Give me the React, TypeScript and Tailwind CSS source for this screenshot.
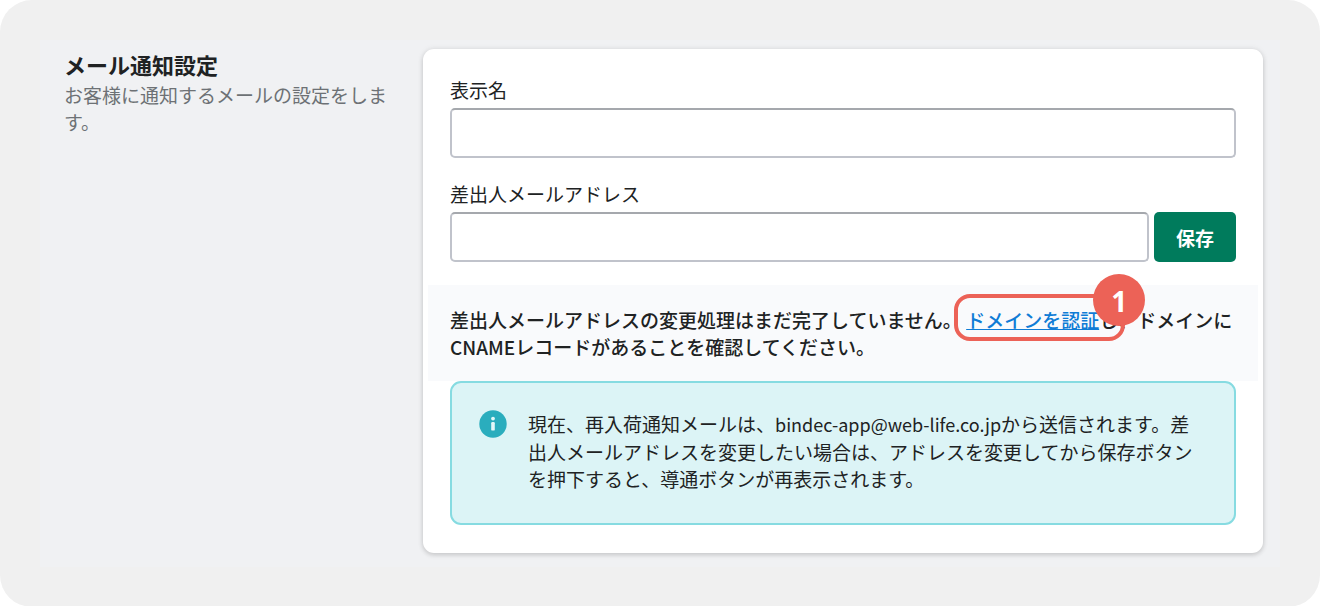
import { useState, type ReactNode } from "react";

interface FieldProps {
  id: string;
  label: string;
  type?: string;
  value: string;
  onChange: (value: string) => void;
  children?: ReactNode;
}

function Field({ id, label, type = "text", value, onChange, children }: FieldProps) {
  return (
    <div>
      <label htmlFor={id} className="block">
        {label}
      </label>
      <div className="mt-[5px] flex gap-[5px]">
        <input
          id={id}
          type={type}
          value={value}
          onChange={(e) => onChange(e.target.value)}
          className="h-[50px] min-w-0 flex-1 rounded-[5px] border-2 border-[#c0c3cb] border-t-[#a5a8ad] bg-white px-4 outline-none focus:border-[#458fff]"
        />
        {children}
      </div>
    </div>
  );
}

function InfoIcon() {
  return (
    <svg viewBox="0 0 28 28" className="h-7 w-7 shrink-0" aria-hidden="true">
      <circle cx="14" cy="14" r="13.7" fill="#2aadbd" />
      <circle cx="14" cy="8.6" r="1.9" fill="#e3f7f8" />
      <rect x="12.2" y="12" width="3.6" height="8.6" rx="1.2" fill="#e3f7f8" />
    </svg>
  );
}

function StepMarker({ step }: { step: number }) {
  return (
    <>
      <span className="pointer-events-none absolute -top-3 -right-[26px] -bottom-2 -left-3 rounded-2xl border-4 border-[#ec6257]" />
      <span className="pointer-events-none absolute -top-8 -right-[46px] flex h-[52px] w-[52px] items-center justify-center rounded-full bg-[#ec6257] pt-0.5 font-['Noto_Sans',sans-serif] text-[28px] font-bold text-white">
        {step}
      </span>
    </>
  );
}

export default function App() {
  const [displayName, setDisplayName] = useState("");
  const [senderEmail, setSenderEmail] = useState("");

  return (
    <div className="rounded-[32px] bg-[#f0f0f0] p-10 font-['Noto_Sans_CJK_JP',sans-serif] text-[19px] leading-[27px] text-[#202223]">
      <section className="flex bg-[#f0f1f3] pt-[9px] pr-[17px] pb-[14px] pl-6">
        <div className="mr-[35px] w-[324px] shrink-0">
          <h2 className="text-[22px] leading-[30px] font-bold">メール通知設定</h2>
          <p className="mt-0.5 text-[#6d7175]">お客様に通知するメールの設定をします。</p>
        </div>

        <form
          className="min-w-0 flex-1 rounded-[11px] bg-white pb-7 shadow-[0_0_6px_rgba(23,24,24,0.08),0_2px_5px_rgba(0,0,0,0.14)]"
          onSubmit={(e) => e.preventDefault()}
        >
          <div className="flex flex-col gap-[22px] px-[27px] pt-[27px]">
            <Field id="display-name" label="表示名" value={displayName} onChange={setDisplayName} />
            <Field
              id="sender-email"
              label="差出人メールアドレス"
              type="email"
              value={senderEmail}
              onChange={setSenderEmail}
            >
              <button
                type="submit"
                className="w-[82px] shrink-0 rounded-[5px] bg-[#007b5c] font-bold text-white"
              >
                保存
              </button>
            </Field>
          </div>

          {/* Domain verification notice */}
          <div className="mx-[5px] mt-[23px] bg-[#f9fafc] px-[22px] pt-[21px] pb-[21px] font-medium">
            差出人メールアドレスの変更処理はまだ完了していません。{" "}
            <span className="relative inline-block">
              <a href="#verify-domain" className="text-[#0f7cd6] underline">
                ドメインを認証
              </a>
              <StepMarker step={1} />
            </span>
            し、ドメインにCNAMEレコードがあることを確認してください。
          </div>

          <div className="mx-[27px] flex gap-[21px] rounded-[11px] border-2 border-[#86dbe1] bg-[#dcf4f6] px-[27px] pt-[27px] pb-[31px]">
            <InfoIcon />
            <p>
              現在、再入荷通知メールは、
              <span className="text-[18px]">bindec-app@web-life.co.jp</span>
              から送信されます。差出人メールアドレスを変更したい場合は、アドレスを変更してから保存ボタンを押下すると、導通ボタンが再表示されます。
            </p>
          </div>
        </form>
      </section>
    </div>
  );
}
